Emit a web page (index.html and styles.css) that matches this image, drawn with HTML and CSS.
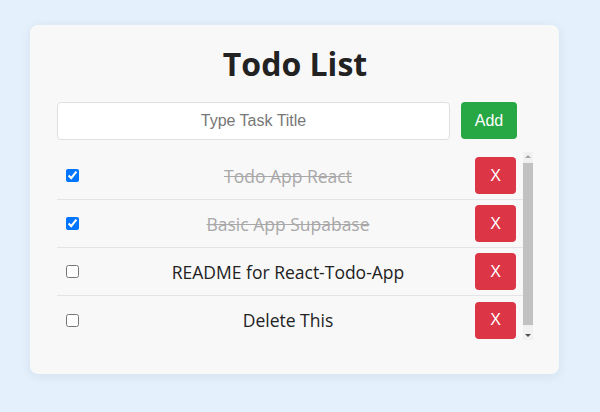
FILE: index.html
```html
<!DOCTYPE html>
<html>
<head>
<meta charset="utf-8">
<link rel="stylesheet" href="styles.css">
</head>
<body>
<div class="card">
  <h1 class="title">Todo List</h1>
  <form class="add-form">
    <input class="task-input" type="text" placeholder="Type Task Title">
    <button class="add-btn" type="button">Add</button>
  </form>
  <div class="list">
    <div class="rows">
      <div class="row">
        <input class="check" type="checkbox" checked>
        <span class="task done">Todo App React</span>
        <button class="del-btn" type="button">X</button>
      </div>
      <div class="row">
        <input class="check" type="checkbox" checked>
        <span class="task done">Basic App Supabase</span>
        <button class="del-btn" type="button">X</button>
      </div>
      <div class="row">
        <input class="check" type="checkbox">
        <span class="task">README for React-Todo-App</span>
        <button class="del-btn" type="button">X</button>
      </div>
      <div class="row last">
        <input class="check" type="checkbox">
        <span class="task">Delete This</span>
        <button class="del-btn" type="button">X</button>
      </div>
    </div>
    <div class="scrollbar">
      <svg class="arrow" width="10" height="10" viewBox="0 0 10 10"><polygon points="2,6 8,6 5,3" fill="#a3a3a3"/></svg>
      <div class="thumb"></div>
      <div class="track-rest"></div>
      <svg class="arrow" width="10" height="10" viewBox="0 0 10 10"><polygon points="2,4 8,4 5,7" fill="#505050"/></svg>
    </div>
  </div>
</div>
</body>
</html>
```

FILE: styles.css
```css
html, body {
  margin: 0;
  padding: 0;
}
body {
  background: #e4f0fb;
  font-family: "Open Sans", "Noto Sans", sans-serif;
  height: 412px;
  overflow: hidden;
}
.card {
  margin: 25px 0 0 30px;
  width: 529px;
  height: 349px;
  box-sizing: border-box;
  padding: 0 26px 0 27px;
  background: #f8f8f9;
  border-radius: 8px;
  box-shadow: 0 2px 10px rgba(80, 120, 160, 0.12);
  display: flex;
  flex-direction: column;
}
.title {
  margin: 0;
  height: 77px;
  box-sizing: border-box;
  padding-top: 19px;
  line-height: 40px;
  font-size: 32px;
  font-weight: 700;
  color: #222;
  text-align: center;
}
.add-form {
  display: flex;
  gap: 11px;
  width: 460px;
  margin: 0;
}
.task-input {
  flex: 1;
  height: 38px;
  box-sizing: border-box;
  border: 1px solid #e0e0e0;
  border-radius: 4px;
  background: #fff;
  font-family: "Liberation Sans", Arial, sans-serif;
  font-size: 16px;
  text-align: center;
  padding: 0 8px;
  outline: none;
}
.task-input::placeholder {
  color: #777;
}
.add-btn {
  width: 56px;
  height: 37px;
  border: none;
  border-radius: 4px;
  background: #28a745;
  color: #fff;
  font-family: "Liberation Sans", Arial, sans-serif;
  font-size: 16px;
  padding: 0;
}
.list {
  margin-top: 12px;
  height: 188px;
  display: flex;
  overflow: hidden;
}
.rows {
  flex: 1;
  min-width: 0;
}
.scrollbar {
  width: 10px;
  flex: none;
  background: #f1f1f2;
  display: flex;
  flex-direction: column;
}
.arrow {
  display: block;
  flex: none;
}
.thumb {
  height: 162px;
  margin-top: 1px;
  background: #c1c1c1;
  flex: none;
}
.track-rest {
  flex: 1;
}
.row {
  display: flex;
  align-items: center;
  height: 48px;
  box-sizing: border-box;
  padding: 0 7px 0 9px;
  border-bottom: 1px solid #e4e4e6;
}
.row.last {
  border-bottom: none;
}
.check {
  width: 13px;
  height: 13px;
  margin: 0;
}
.task {
  flex: 1;
  text-align: center;
  font-size: 17.5px;
  color: #222;
  padding-left: 22px;
}
.task.done {
  color: #a8a8a8;
  text-decoration: line-through;
}
.del-btn {
  width: 41px;
  height: 37px;
  border: none;
  border-radius: 4px;
  background: #dc3545;
  color: #fff;
  font-family: "Liberation Sans", Arial, sans-serif;
  font-size: 16px;
  padding: 0;
}
```
